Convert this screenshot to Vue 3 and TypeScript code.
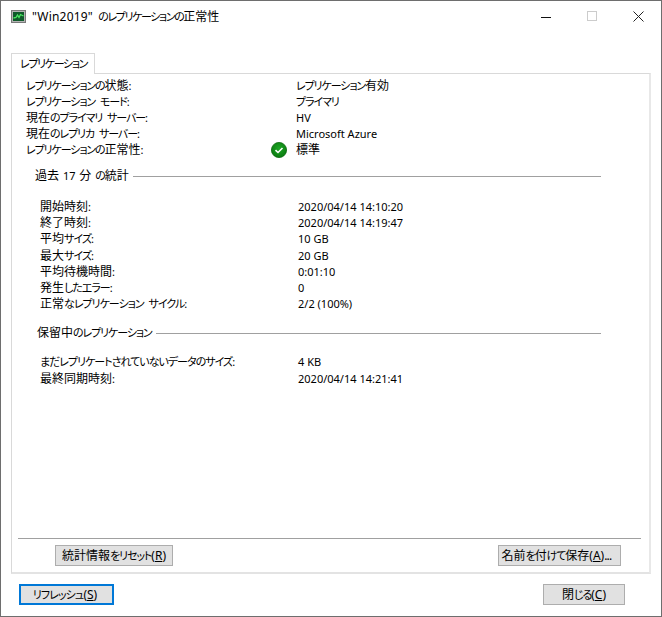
<script setup lang="ts">
interface Row { label: string; value: string; ok?: boolean }
interface Seg { v: string; c: string }
const titleText = '"Win2019" のレプリケーションの正常性'
const top: Row[] = [
  { label: 'レプリケーションの状態:', value: 'レプリケーション有効' },
  { label: 'レプリケーション モード:', value: 'プライマリ' },
  { label: '現在のプライマリ サーバー:', value: 'HV' },
  { label: '現在のレプリカ サーバー:', value: 'Microsoft Azure' },
  { label: 'レプリケーションの正常性:', value: '標準', ok: true },
]
const stats: Row[] = [
  { label: '開始時刻:', value: '2020/04/14 14:10:20' },
  { label: '終了時刻:', value: '2020/04/14 14:19:47' },
  { label: '平均サイズ:', value: '10 GB' },
  { label: '最大サイズ:', value: '20 GB' },
  { label: '平均待機時間:', value: '0:01:10' },
  { label: '発生したエラー:', value: '0' },
  { label: '正常なレプリケーション サイクル:', value: '2/2 (100%)' },
]
const pending: Row[] = [
  { label: 'まだレプリケートされていないデータのサイズ:', value: '4 KB' },
  { label: '最終同期時刻:', value: '2020/04/14 14:21:41' },
]
// Meiryo UI-style metrics: kana runs are set narrower than kanji.
function segs(text: string): Seg[] {
  const out: Seg[] = []
  for (const m of text.matchAll(/[\u3040-\u30ff]+|[\x20-\x7e]+|[^\u3040-\u30ff\x20-\x7e]+/g)) {
    const v = m[0]
    const c = /^[\u3040-\u30ff]/.test(v) ? 'kana' : /^[\x20-\x7e]/.test(v) ? 'lat' : 'kanji'
    out.push({ v, c })
  }
  return out
}
</script>

<template>
  <div class="window">
    <header class="titlebar">
      <svg class="app-icon" width="15" height="13" viewBox="0 0 15 13">
        <rect x="0.5" y="0.5" width="14" height="12" fill="#b4b4b4" stroke="#7a7a7a" />
        <rect x="2" y="2" width="11" height="9" fill="#0f5a2a" />
        <path d="M2.5 8 L5 7.5 L6.5 5 L8 7.5 L9.5 4.5 L12.5 6" fill="none" stroke="#4be862" stroke-width="1.3" />
      </svg>
      <span class="title"><span v-for="(s, i) in segs(titleText)" :key="i" :class="s.c">{{ s.v }}</span></span>
      <div class="controls">
        <svg width="12" height="12" viewBox="0 0 12 12" class="ctl-min"><path d="M1 6.5H11" stroke="#111" /></svg>
        <svg width="11" height="11" viewBox="0 0 11 11" class="ctl-max"><rect x="0.5" y="0.5" width="9" height="9" fill="none" stroke="#ccc" /></svg>
        <svg width="11" height="11" viewBox="0 0 11 11" class="ctl-close"><path d="M0.5 0.5L10.5 10.5M10.5 0.5L0.5 10.5" stroke="#222" /></svg>
      </div>
    </header>

    <div class="tabs"><div class="tab"><span v-for="(s, i) in segs('レプリケーション')" :key="i" :class="s.c">{{ s.v }}</span></div></div>

    <section class="panel">
      <div class="rows summary">
        <div v-for="r in top" :key="r.label" class="row">
          <span class="label"><span v-for="(s, i) in segs(r.label)" :key="i" :class="s.c">{{ s.v }}</span></span>
          <span class="value">
            <svg v-if="r.ok" class="ok" width="16" height="16" viewBox="0 0 16 16">
              <defs>
                <radialGradient id="okFill" cx="50%" cy="40%" r="60%">
                  <stop offset="0%" stop-color="#1ea825" />
                  <stop offset="100%" stop-color="#0a7a10" />
                </radialGradient>
              </defs>
              <circle cx="8" cy="8" r="7.6" fill="url(#okFill)" stroke="#0a6a0e" stroke-width="0.8" />
              <path d="M4.5 8.2L7 10.5L11.5 6" fill="none" stroke="#fff" stroke-width="1.6" />
            </svg>
            <span v-for="(s, i) in segs(r.value)" :key="i" :class="s.c">{{ s.v }}</span>
          </span>
        </div>
      </div>

      <div class="legend first"><span><span v-for="(s, i) in segs('過去 17 分 の統計')" :key="i" :class="s.c">{{ s.v }}</span></span><i></i></div>
      <div class="rows group">
        <div v-for="r in stats" :key="r.label" class="row">
          <span class="label"><span v-for="(s, i) in segs(r.label)" :key="i" :class="s.c">{{ s.v }}</span></span>
          <span class="value"><span v-for="(s, i) in segs(r.value)" :key="i" :class="s.c">{{ s.v }}</span></span>
        </div>
      </div>

      <div class="legend second"><span><span v-for="(s, i) in segs('保留中のレプリケーション')" :key="i" :class="s.c">{{ s.v }}</span></span><i></i></div>
      <div class="rows group">
        <div v-for="r in pending" :key="r.label" class="row">
          <span class="label"><span v-for="(s, i) in segs(r.label)" :key="i" :class="s.c">{{ s.v }}</span></span>
          <span class="value"><span v-for="(s, i) in segs(r.value)" :key="i" :class="s.c">{{ s.v }}</span></span>
        </div>
      </div>

      <div class="panel-foot">
        <button class="btn reset"><span class="kanji">統計情報</span><span class="kana">をリセット</span><span class="lat">(<u>R</u>)</span></button>
        <button class="btn save"><span class="kanji">名前</span><span class="kana">を</span><span class="kanji">付</span><span class="kana">けて</span><span class="kanji">保存</span><span class="lat">(<u>A</u>)<span class="dots">...</span></span></button>
      </div>
    </section>

    <footer class="footer">
      <button class="btn refresh"><span class="kana">リフレッシュ</span><span class="lat">(<u>S</u>)</span></button>
      <button class="btn close"><span class="kanji">閉</span><span class="kana">じる</span><span class="lat">(<u>C</u>)</span></button>
    </footer>
  </div>
</template>

<style>
html, body { margin: 0; background: #fff; }
</style>

<style scoped>
.window {
  width: 662px;
  height: 617px;
  box-sizing: border-box;
  border: 1px solid #6e6e6e;
  background: #fff;
  display: flex;
  flex-direction: column;
  font-family: "Noto Sans", "Noto Sans CJK JP", sans-serif;
  font-size: 12px;
  line-height: 16px;
  color: #000;
  font-feature-settings: "palt";
}
.kana { font-size: 11px; letter-spacing: -1.1px; }
.lat { font-size: 11px; }
.kanji { font-size: 12px; }
.label .lat { word-spacing: 2px; }
.legend .lat { word-spacing: 1px; }
.dots { letter-spacing: -0.8px; }
.title .kana { letter-spacing: -1.4px; }
.title .lat { font-size: 12px; word-spacing: 2px; letter-spacing: 0.2px; }
.titlebar {
  height: 31px;
  display: flex;
  align-items: center;
  padding-left: 10px;
  flex: none;
}
.app-icon { flex: none; margin-right: 6px; }
.title { flex: 1; white-space: nowrap; }
.controls { display: flex; align-items: center; }
.ctl-min { margin-right: 35px; }
.ctl-max { margin-right: 35px; }
.ctl-close { margin-right: 17px; }
.tabs { flex: none; margin-top: 21px; padding-left: 10px; height: 21px; position: relative; z-index: 1; }
.tab {
  width: 84px;
  height: 21px;
  box-sizing: border-box;
  border: 1px solid #d9d9d9;
  border-bottom: none;
  background: #fff;
  padding-left: 8px;
  line-height: 20px;
  white-space: nowrap;
}
.tab .kana { letter-spacing: -1.35px; }
.panel {
  flex: none;
  margin: -1px 0 0 10px;
  width: 640px;
  height: 501px;
  box-sizing: border-box;
  border: 1px solid #d9d9d9;
  border-right: 2px solid #e8e8e8;
  border-bottom: 2px solid #e3e3e3;
  display: flex;
  flex-direction: column;
  padding-top: 4px;
}
.rows { display: flex; flex-direction: column; }
.row { display: grid; height: 16px; white-space: nowrap; }
.summary .row { grid-template-columns: 270px 1fr; padding-left: 14px; }
.group .row { grid-template-columns: 258px 1fr; padding-left: 28px; height: 16.2px; }
.group .kana { letter-spacing: -1px; }
.value { position: relative; }
.ok { position: absolute; left: -25px; top: 0; }
.legend {
  display: flex;
  align-items: center;
  gap: 4px;
  height: 16px;
  padding-left: 23px;
  margin-right: 48px;
  white-space: nowrap;
}
.legend i { flex: 1; height: 1px; background: #a0a0a0; }
.legend.first { margin-top: 10px; margin-bottom: 15px; }
.legend.second { margin-top: 13px; margin-bottom: 13px; padding-left: 25px; }
.panel-foot {
  margin: auto 8px 0 6px;
  height: 27px;
  border-top: 1px solid #a0a0a0;
  display: flex;
  justify-content: space-between;
  padding: 6px 20px 0 37px;
  flex: none;
}
.btn {
  height: 21px;
  box-sizing: border-box;
  border: 1px solid #adadad;
  background: #e1e1e1;
  font: inherit;
  font-feature-settings: inherit;
  color: #000;
  padding: 0;
  line-height: 18px;
  text-align: center;
  white-space: nowrap;
}
.btn .lat { font-size: 12px; }
.reset { width: 118px; }
.save { width: 123px; padding-right: 6px; }
.footer {
  flex: none;
  display: flex;
  justify-content: space-between;
  padding: 10px 36px 0 18px;
}
.refresh { width: 95px; border: 2px solid #0078d7; line-height: 16px; padding-right: 3px; }
.refresh .kana { letter-spacing: -0.9px; }
.close { width: 82px; }
</style>
